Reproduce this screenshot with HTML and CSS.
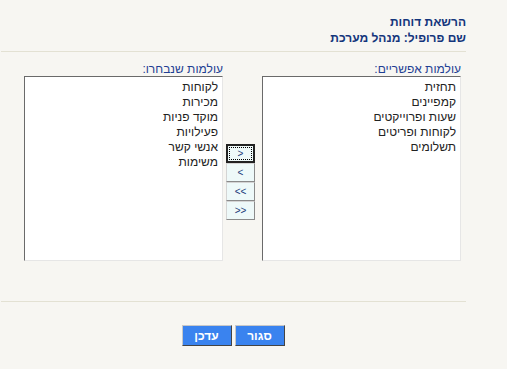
FILE: index.html
```html
<!DOCTYPE html>
<html lang="he" dir="rtl">
<head>
    <meta charset="UTF-8">
    <title>הרשאת דוחות</title>
    <link rel="stylesheet" href="styles.css">
</head>
<body>
    <div class="page">
        <div class="header">
            <div>הרשאת דוחות</div>
            <div>שם פרופיל: מנהל מערכת</div>
        </div>
        <div class="lists">
            <div class="list-col">
                <div class="list-label">עולמות אפשריים:</div>
                <div class="list-box">
                    <div>תחזית</div>
                    <div>קמפיינים</div>
                    <div>שעות ופרוייקטים</div>
                    <div>לקוחות ופריטים</div>
                    <div>תשלומים</div>
                </div>
            </div>
            <div class="move-buttons">
                <button class="move-btn focused"><span>&gt;</span></button>
                <button class="move-btn"><span>&lt;</span></button>
                <button class="move-btn"><span>&lt;&lt;</span></button>
                <button class="move-btn"><span>&gt;&gt;</span></button>
            </div>
            <div class="list-col">
                <div class="list-label">עולמות שנבחרו:</div>
                <div class="list-box">
                    <div>לקוחות</div>
                    <div>מכירות</div>
                    <div>מוקד פניות</div>
                    <div>פעילויות</div>
                    <div>אנשי קשר</div>
                    <div>משימות</div>
                </div>
            </div>
        </div>
        <div class="footer">
            <button class="action-btn">סגור</button>
            <button class="action-btn">עדכן</button>
        </div>
    </div>
</body>
</html>
```

FILE: styles.css
```css
body {
    margin: 0;
    padding: 0;
    background: #f7f6f2;
    font-family: "Liberation Sans", Arial, sans-serif;
    font-size: 12px;
}
.page {
    width: 466px;
    margin-left: 0;
    margin-right: auto;
}
.header {
    padding-top: 14px;
    padding-bottom: 5px;
    margin-left: 1px;
    border-bottom: 1px solid #e3e1d3;
    color: #14357c;
    font-weight: bold;
    line-height: 16px;
}
.lists {
    display: flex;
    padding-top: 10px;
    padding-right: 5px;
    height: 250px;
    box-sizing: border-box;
    margin-left: 1px;
    border-bottom: 1px solid #e3e1d3;
}
.list-col {
    width: 199px;
}
.list-label {
    color: #1f3f93;
    line-height: 14px;
    height: 14px;
}
.list-box {
    height: 185px;
    box-sizing: border-box;
    background: #fff;
    border: 1px solid;
    border-color: #6a6a6a #e6e6e6 #e6e6e6 #6a6a6a;
    padding: 3px 4px 0 4px;
    color: #222;
    line-height: 15px;
}
.move-buttons {
    display: flex;
    flex-direction: column;
    width: 29px;
    margin: 82px 7px 0 3px;
}
.move-btn {
    height: 19px;
    width: 29px;
    padding: 0;
    background: #eef9f9;
    border: 1px solid;
    border-color: #d4d4d4 #8a8a8a #8a8a8a #d4d4d4;
    color: #1b3a7a;
    font-family: "Liberation Sans", Arial, sans-serif;
    font-size: 10px;
    direction: ltr;
}
.move-btn.focused {
    border: 2px solid #222;
    padding: 1px;
}
.move-btn.focused span {
    display: block;
    height: 100%;
    box-sizing: border-box;
    border: 1px dotted #000;
    line-height: 11px;
}
.footer {
    display: flex;
    justify-content: center;
    gap: 3px;
    padding-top: 23px;
}
.action-btn {
    width: 50px;
    height: 21px;
    padding: 0;
    background: #3a83ef;
    border: 1px solid;
    border-color: #c8c8c8 #444 #444 #c8c8c8;
    color: #fff;
    font-family: "Liberation Sans", Arial, sans-serif;
    font-size: 12px;
    font-weight: bold;
}
```
